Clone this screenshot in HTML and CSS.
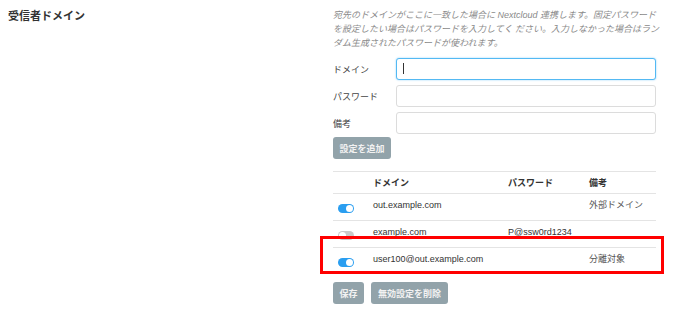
FILE: index.html
```html
<!DOCTYPE html>
<html lang="ja">
	<head>
		<meta charset="utf-8">
		<meta name="viewport" content="width=device-width, initial-scale=1.0">
		<title>受信者ドメイン</title>
		<link rel="stylesheet" href="styles.css">
	</head>
	<body>
		<div class="section">
			<h2 class="section-title">受信者ドメイン</h2>
			<div class="section-body">
				<p class="hint">宛先のドメインがここに一致した場合に Nextcloud 連携します。固定パスワード<br>を設定したい場合はパスワードを入力してく ださい。入力しなかった場合はラン<br>ダム生成されたパスワードが使われます。</p>

				<div class="field">
					<label for="domain">ドメイン</label>
					<span class="focused"><input type="text" id="domain"></span>
				</div>
				<div class="field">
					<label for="password">パスワード</label>
					<input type="text" id="password">
				</div>
				<div class="field">
					<label for="note">備考</label>
					<input type="text" id="note">
				</div>
				<button class="btn">設定を追加</button>

				<div class="table-wrap">
					<table class="domains">
						<tr>
							<th class="col-toggle"></th>
							<th class="col-domain">ドメイン</th>
							<th class="col-pass">パスワード</th>
							<th class="col-note">備考</th>
						</tr>
						<tr>
							<td><span class="toggle on"></span></td>
							<td>out.example.com</td>
							<td></td>
							<td class="muted">外部ドメイン</td>
						</tr>
						<tr>
							<td><span class="toggle"></span></td>
							<td>example.com</td>
							<td>P@ssw0rd1234</td>
							<td></td>
						</tr>
						<tr>
							<td><span class="toggle on"></span></td>
							<td>user100@out.example.com</td>
							<td></td>
							<td class="muted">分離対象</td>
						</tr>
					</table>
					<div class="highlight"></div>
				</div>

				<div class="actions">
					<button class="btn">保存</button>
					<button class="btn">無効設定を削除</button>
				</div>
			</div>
		</div>
	</body>
</html>
```

FILE: styles.css
```css
body {
	margin: 0;
	background-color: #fff;
	font-family: "Liberation Sans", "Noto Sans CJK JP", sans-serif;
	font-size: 9px;
	color: #333;
}
.section {
	display: flex;
}
.section-title {
	width: 325px;
	margin: 0;
	padding: 9px 0 0 8px;
	font-size: 11px;
	line-height: 14px;
	font-weight: bold;
	color: #333;
}
.section-body {
	width: 323px;
	padding-top: 8px;
}
.hint {
	margin: 0 0 8px 0;
	font-style: italic;
	line-height: 14px;
	color: #8a8a8a;
	white-space: nowrap;
}
.field {
	display: flex;
	align-items: center;
	height: 22px;
	margin-bottom: 5px;
}
.field label {
	width: 63px;
	color: #444;
}
.field input {
	box-sizing: border-box;
	width: 260px;
	height: 22px;
	margin: 0;
	padding: 0 6px;
	border: 1px solid #dcdcdc;
	border-radius: 3px;
	background: #fff;
	font: inherit;
	outline: none;
}
.focused {
	position: relative;
	display: block;
	height: 22px;
}
.focused input {
	border-color: #53b9f3;
	box-shadow: 0 0 2px #8fd0fb;
}
.focused::after {
	content: "";
	position: absolute;
	left: 7px;
	top: 5px;
	width: 1px;
	height: 11px;
	background: #333;
}
.btn {
	height: 22px;
	margin: 0;
	padding: 0 6px;
	border: none;
	border-radius: 3px;
	background-color: #92a3aa;
	color: #f2f2f2;
	font-family: inherit;
	font-size: 9px;
	font-weight: bold;
	cursor: pointer;
}
.field + .btn {
	margin-top: -2px;
	width: 58px;
}
.table-wrap {
	position: relative;
	margin-top: 12px;
}
.domains {
	width: 323px;
	border-collapse: collapse;
}
.domains th,
.domains td {
	padding: 0;
	text-align: left;
	border-top: 1px solid #e4e4e4;
	white-space: nowrap;
}
.domains th {
	height: 21px;
	font-weight: bold;
	color: #333;
}
.domains td {
	height: 21px;
	padding-bottom: 5px;
}
.domains td:first-child {
	padding: 0;
	height: 26px;
}
.col-toggle {
	width: 40px;
}
.col-domain {
	width: 135px;
}
.col-pass {
	width: 81px;
}
.muted {
	color: #555;
}
.toggle {
	position: relative;
	display: block;
	width: 16px;
	height: 9px;
	margin: 3px 0 0 5px;
	border-radius: 5px;
	background-color: #c9c9c9;
}
.toggle::after {
	content: "";
	position: absolute;
	top: 1px;
	left: 1px;
	width: 7px;
	height: 7px;
	border-radius: 50%;
	background: #fff;
}
.toggle.on {
	background-color: #2a9ef0;
}
.toggle.on::after {
	left: 8px;
}
.highlight {
	position: absolute;
	left: -13px;
	top: 65px;
	width: 338px;
	height: 32px;
	border: 3px solid #f00;
}
.actions {
	display: flex;
	gap: 7px;
	margin-top: 8px;
}
.actions .btn:first-child {
	width: 31px;
	padding: 0;
}
.actions .btn:last-child {
	width: 77px;
	padding: 0;
}
```
